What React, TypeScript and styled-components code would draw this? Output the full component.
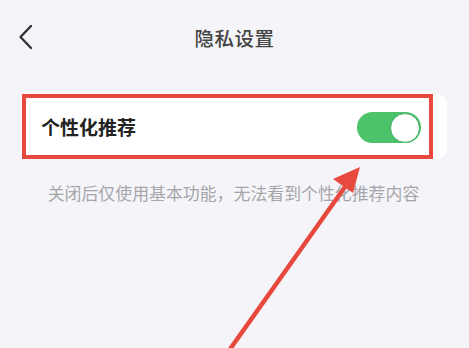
import * as React from "react";
import styled, { createGlobalStyle } from "styled-components";

const GlobalStyle = createGlobalStyle`
    html, body {
        margin: 0;
        padding: 0;
        background: #f5f5f9;
    }
    body {
        font-family: "Noto Sans CJK SC", "Noto Sans", sans-serif;
    }
`;

const Page = styled.div`
    position: relative;
    width: 469px;
    height: 348px;
    overflow: hidden;
    background: #f5f5f9;
`;

const Header = styled.div`
    position: relative;
    height: 74px;
    display: flex;
    align-items: center;
    justify-content: center;
`;

const Back = styled.button`
    position: absolute;
    left: 12px;
    top: 22px;
    width: 28px;
    height: 30px;
    padding: 0;
    border: none;
    background: transparent;
    display: flex;
    align-items: center;
    justify-content: center;
`;

const Title = styled.h1`
    margin: 0;
    font-size: 19.5px;
    font-weight: 500;
    color: #444;
    letter-spacing: 0.5px;
`;

const Content = styled.div`
    padding: 20px 22px 0;
`;

const Card = styled.div`
    background: #fff;
    border-radius: 10px;
    height: 65px;
    display: flex;
`;

const Row = styled.div<{ $marked: boolean }>`
    flex: 0 0 411px;
    box-sizing: border-box;
    border: 4px solid ${(p) => (p.$marked ? "#e8493f" : "transparent")};
    display: flex;
    align-items: center;
    justify-content: space-between;
    padding: 0 8px 0 15px;
`;

const Label = styled.span`
    font-size: 19px;
    font-weight: 700;
    color: #222;
`;

const Switch = styled.div<{ $on: boolean }>`
    position: relative;
    width: 64px;
    height: 31px;
    border-radius: 16px;
    background: ${(p) => (p.$on ? "#4cc36b" : "#ddd")};
    margin-top: 2px;
`;

const Knob = styled.div<{ $on: boolean }>`
    position: absolute;
    top: 0.5px;
    ${(p) => (p.$on ? "right: 1.5px;" : "left: 1.5px;")}
    width: 30px;
    height: 30px;
    box-sizing: border-box;
    border-radius: 50%;
    background: #fff;
    border: 1.5px solid #3aa85a;
`;

const Hint = styled.p`
    margin: 21px 0 0;
    text-align: center;
    font-size: 16.9px;
    color: #a6a6aa;
    padding-right: 2px;
    white-space: nowrap;
`;

const Overlay = styled.svg`
    position: absolute;
    left: 0;
    top: 0;
    pointer-events: none;
`;

export default function App() {
    const [on, setOn] = React.useState(true);
    return (
        <Page>
            <GlobalStyle />
            <Header>
                <Back aria-label="返回">
                    <svg width="16" height="26" viewBox="0 0 16 26">
                        <path
                            d="M13 2 L2.5 13 L13 24"
                            fill="none"
                            stroke="#333"
                            strokeWidth="2.4"
                            strokeLinecap="round"
                            strokeLinejoin="round"
                        />
                    </svg>
                </Back>
                <Title>隐私设置</Title>
            </Header>
            <Content>
                <Card>
                    <Row $marked>
                        <Label>个性化推荐</Label>
                        <Switch $on={on} onClick={() => setOn(!on)}>
                            <Knob $on={on} />
                        </Switch>
                    </Row>
                </Card>
                <Hint>关闭后仅使用基本功能，无法看到个性化推荐内容</Hint>
            </Content>
            <Overlay width="469" height="348" viewBox="0 0 469 348">
                <line x1="228" y1="352" x2="352" y2="177" stroke="#e8493f" strokeWidth="4.5" />
                <polygon points="360,167 333,179 353,193" fill="#e8493f" />
            </Overlay>
        </Page>
    );
}
